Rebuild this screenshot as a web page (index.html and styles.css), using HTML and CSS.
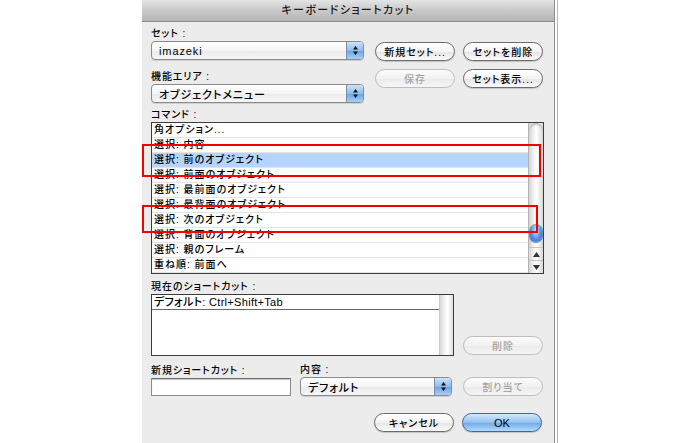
FILE: index.html
```html
<!DOCTYPE html>
<html lang="ja">
<head>
    <meta charset="utf-8">
    <title>キーボードショートカット</title>
    <link rel="stylesheet" href="styles.css">
</head>
<body>
    <div class="dialog">
        <div class="titlebar">キーボードショートカット</div>
        <div class="content">
            <div class="top">
                <div class="top-left">
                    <div class="label">セット :</div>
                    <div class="select"><span>imazeki</span><i class="stepper"><svg width="7" height="11" viewBox="0 0 7 11"><path d="M3.5 1 L6 4.5 H1 Z M3.5 10 L6 6.5 H1 Z" fill="#111"/></svg></i></div>
                    <div class="label second">機能エリア :</div>
                    <div class="select"><span>オブジェクトメニュー</span><i class="stepper"><svg width="7" height="11" viewBox="0 0 7 11"><path d="M3.5 1 L6 4.5 H1 Z M3.5 10 L6 6.5 H1 Z" fill="#111"/></svg></i></div>
                </div>
                <div class="top-buttons">
                    <button class="btn">新規セット...</button>
                    <button class="btn">セットを削除</button>
                    <button class="btn" disabled>保存</button>
                    <button class="btn">セット表示...</button>
                </div>
            </div>

            <div class="label command">コマンド :</div>
            <div class="list">
                <div class="rows">
                    <div class="row">角オプション...</div>
                    <div class="row">選択: 内容</div>
                    <div class="row selected">選択: 前のオブジェクト</div>
                    <div class="row">選択: 前面のオブジェクト</div>
                    <div class="row">選択: 最前面のオブジェクト</div>
                    <div class="row">選択: 最背面のオブジェクト</div>
                    <div class="row">選択: 次のオブジェクト</div>
                    <div class="row">選択: 背面のオブジェクト</div>
                    <div class="row">選択: 親のフレーム</div>
                    <div class="row">重ね順: 前面へ</div>
                </div>
                <div class="scrollbar">
                    <div class="track"><div class="thumb"></div></div>
                    <div class="arrow"><svg width="7" height="5" viewBox="0 0 7 5"><path d="M3.5 0 L7 5 H0 Z" fill="#333"/></svg></div>
                    <div class="arrow"><svg width="7" height="5" viewBox="0 0 7 5"><path d="M3.5 5 L7 0 H0 Z" fill="#333"/></svg></div>
                </div>
            </div>

            <div class="label current-label">現在のショートカット :</div>
            <div class="current-row">
                <div class="current-box">
                    <div class="rows">
                        <div class="row current">デフォルト: Ctrl+Shift+Tab</div>
                    </div>
                    <div class="trough"></div>
                </div>
                <button class="btn delete" disabled>削除</button>
            </div>

            <div class="assign-row">
                <div class="field-new">
                    <div class="label">新規ショートカット :</div>
                    <div class="input"></div>
                </div>
                <div class="field-content">
                    <div class="label">内容 :</div>
                    <div class="select"><span>デフォルト</span><i class="stepper"><svg width="7" height="11" viewBox="0 0 7 11"><path d="M3.5 1 L6 4.5 H1 Z M3.5 10 L6 6.5 H1 Z" fill="#111"/></svg></i></div>
                </div>
                <button class="btn assign" disabled>割り当て</button>
            </div>

            <div class="footer">
                <button class="btn">キャンセル</button>
                <button class="btn ok">OK</button>
            </div>
        </div>

        <div class="mark mark-first"></div>
        <div class="mark mark-second"></div>
    </div>
</body>
</html>
```

FILE: styles.css
```css
body {
    margin: 0;
    background: #fff;
    font-family: "Liberation Sans", "Noto Sans CJK JP", sans-serif;
    font-size: 10px;
    font-weight: 500;
    font-feature-settings: "palt";
    color: #000;
}
.dialog {
    position: relative;
    width: 412px;
    height: 443px;
    margin-left: 142px;
    background: #ececec;
    border-right: 1px solid #8e8e8e;
    box-shadow: 2px 0 0 #fff, 3px 0 0 #86c9d8;
}
.titlebar {
    height: 21px;
    line-height: 21px;
    background: linear-gradient(#e4e4e4, #c9c9c9 50%, #b4b4b4);
    border-bottom: 1px solid #8a8a8a;
    text-align: center;
    font-size: 11px;
    letter-spacing: 1.4px;
    color: #1a1a1a;
}
.content {
    padding: 5px 0 0 9px;
}
.label {
    height: 14px;
    line-height: 14px;
    letter-spacing: 0.9px;
}
.label.second {
    margin-top: 10px;
}
.top {
    display: flex;
}
.top-left {
    width: 213px;
}
.select {
    position: relative;
    box-sizing: border-box;
    height: 19px;
    border: 1px solid #8a8a8a;
    border-radius: 4px;
    background: linear-gradient(#fff, #f5f5f5 50%, #e9e9e9 51%, #f7f7f7);
    box-shadow: 0 1px 0 #d0d0d0;
    display: flex;
    align-items: center;
    padding-left: 7px;
    font-size: 11px;
    letter-spacing: 0.9px;
}
.stepper {
    margin-left: auto;
    width: 16px;
    height: 17px;
    border-left: 1px solid #7a8ea8;
    border-radius: 0 3px 3px 0;
    background: linear-gradient(#cfe3f9, #8fbbee 50%, #6aa2e6 51%, #a6cff7);
    display: flex;
    align-items: center;
    justify-content: center;
}
.top-buttons {
    margin-left: 11px;
    margin-top: 15px;
    display: grid;
    grid-template-columns: 80px 80px;
    grid-template-rows: 19px 19px;
    column-gap: 8px;
    row-gap: 8px;
}
.btn {
    box-sizing: border-box;
    width: 80px;
    height: 19px;
    padding: 0;
    border: 1px solid #6c6c6c;
    border-radius: 10px;
    background: linear-gradient(#fff, #f4f4f4 50%, #e4e4e4 51%, #fbfbfb);
    box-shadow: 0 1px 1px #c4c4c4;
    font-family: inherit;
    font-weight: 500;
    font-feature-settings: "palt";
    font-size: 10px;
    letter-spacing: 1px;
    color: #000;
}
.btn:disabled {
    border-color: #bdbdbd;
    color: #a4a4a4;
    background: linear-gradient(#fbfbfb, #f2f2f2 50%, #eaeaea 51%, #f6f6f6);
    box-shadow: none;
}
.btn.ok {
    border-color: #41679a;
    background: linear-gradient(#d4e8fb, #93c1f1 50%, #6ea8ea 51%, #b3dafc);
    font-size: 11px;
    letter-spacing: 0;
}
.label.command {
    margin-top: 5px;
}
.list {
    box-sizing: border-box;
    width: 393px;
    height: 152px;
    border: 1px solid #3c3c3c;
    background: #fff;
    display: flex;
}
.rows {
    flex: 1;
}
.row {
    box-sizing: border-box;
    height: 15px;
    line-height: 14px;
    padding-left: 2px;
    border-bottom: 1px solid #e4e4e4;
    letter-spacing: 1px;
    white-space: nowrap;
}
.row.selected {
    background: #b5d5ff;
}
.scrollbar {
    width: 14px;
    border-left: 1px solid #b4b4b4;
    display: flex;
    flex-direction: column;
    background: linear-gradient(to right, #d4d4d4, #f4f4f4 35%, #fff 55%, #d8d8d8);
}
.track {
    flex: 1;
    border-radius: 7px 7px 0 0;
    box-shadow: inset 0 3px 3px -2px #9a9a9a;
}
.thumb {
    margin: 102px 0 0 1px;
    width: 12px;
    height: 17px;
    border-radius: 6px;
    background: radial-gradient(ellipse at 50% 30%, #cfe6ff, #4f92e4 55%, #1f5fc4);
    box-shadow: 0 0 0 1px #6d8fb8;
}
.arrow {
    height: 12px;
    border-top: 1px solid #c4c4c4;
    display: flex;
    align-items: center;
    justify-content: center;
}
.label.current-label {
    margin-top: 6px;
}
.current-row {
    display: flex;
    align-items: flex-end;
}
.current-box {
    box-sizing: border-box;
    width: 303px;
    height: 62px;
    border: 1px solid #3c3c3c;
    background: #fff;
    display: flex;
}
.row.current {
    font-size: 11px;
    letter-spacing: 0.3px;
    border-bottom: 1px solid #6a6a6a;
}
.trough {
    width: 13px;
    background: linear-gradient(to right, #d8d8d8, #f6f6f6 40%, #fff 60%, #dcdcdc);
    border-left: 1px solid #c8c8c8;
}
.btn.delete {
    margin-left: 9px;
    margin-bottom: 1px;
}
.assign-row {
    margin-top: 7px;
    display: flex;
    align-items: flex-end;
}
.field-new {
    width: 140px;
}
.input {
    box-sizing: border-box;
    height: 18px;
    border: 1px solid #8a8a8a;
    border-top-color: #6a6a6a;
    background: #fff;
    box-shadow: inset 0 1px 1px #c8c8c8;
}
.field-content {
    width: 152px;
    margin-left: 9px;
}
.btn.assign {
    margin-left: 11px;
}
.footer {
    width: 391px;
    margin-top: 17px;
    display: flex;
    justify-content: flex-end;
    gap: 8px;
}
.mark {
    position: absolute;
    left: 0;
    box-sizing: border-box;
    border: 2.5px solid #f20000;
}
.mark-first {
    top: 144px;
    width: 399px;
    height: 33px;
}
.mark-second {
    top: 205px;
    width: 396px;
    height: 28px;
}
```
